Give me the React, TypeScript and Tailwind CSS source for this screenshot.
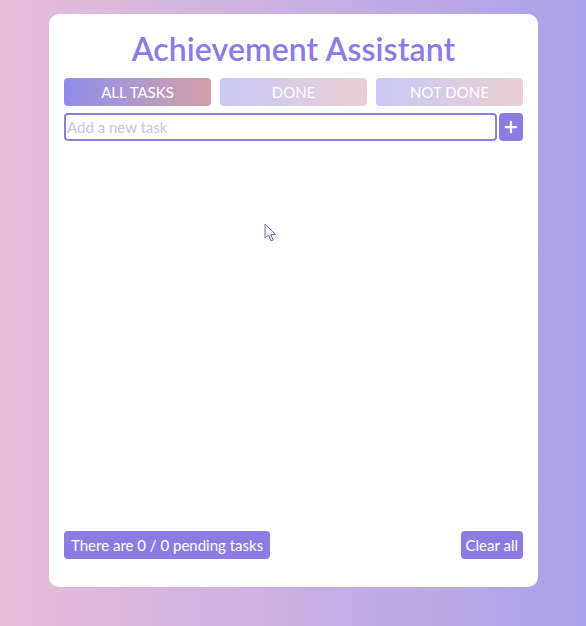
import { Plus } from 'lucide-react'

export default function App() {
  return (
    <div
      className="relative w-[586px] h-[626px] pt-[14px] bg-gradient-to-r from-[#e8bdd9] to-[#aaa1ea]"
      style={{ fontFamily: 'Lato, "Open Sans", sans-serif' }}
    >
      <div className="ml-[49px] w-[489px] h-[573px] rounded-[10px] bg-white px-[15px] pt-[17px] pb-[28px] flex flex-col">
        {/* Header */}
        <h1 className="text-center text-[32px] leading-[36px] font-semibold text-[#8c7be6] tracking-[0.1px]">
          Achievement Assistant
        </h1>

        {/* Filter tabs */}
        <div className="mt-[11px] grid grid-cols-3 gap-[9px]">
          <button className="h-[28px] rounded-[4px] bg-gradient-to-r from-[#8f8deb] to-[#d29fa6] text-white text-[15px]">
            ALL TASKS
          </button>
          <button className="h-[28px] rounded-[4px] bg-gradient-to-r from-[#c9c8f3] to-[#e9cfd3] text-white text-[15px]">
            DONE
          </button>
          <button className="h-[28px] rounded-[4px] bg-gradient-to-r from-[#c9c8f3] to-[#e9cfd3] text-white text-[15px]">
            NOT DONE
          </button>
        </div>

        {/* New task */}
        <div className="mt-[7px] flex gap-[2px]">
          <input
            placeholder="Add a new task"
            className="flex-1 h-[28px] rounded-[4px] border-2 border-[#8e7de3] px-[1px] text-[15px] outline-none placeholder:text-[#c5c3f0]"
          />
          <button className="w-[24px] h-[28px] rounded-[4px] bg-[#8d7be4] text-white flex items-center justify-center">
            <Plus size={18} strokeWidth={3} />
          </button>
        </div>

        <div className="flex-1" />

        {/* Footer */}
        <div className="flex justify-between items-center">
          <span className="h-[28px] px-[7px] rounded-[4px] bg-[#8d7be4] text-white text-[15px] leading-[28px]">
            There are 0 / 0 pending tasks
          </span>
          <button className="h-[28px] px-[5px] rounded-[4px] bg-[#8d7be4] text-white text-[15px]">
            Clear all
          </button>
        </div>
      </div>

      {/* Cursor */}
      <svg
        className="absolute left-[264px] top-[223px]"
        width="14"
        height="20"
        viewBox="0 0 14 20"
      >
        <path
          d="M1 1 L1 15 L4.5 12 L7 18 L9 17 L6.8 11.5 L11.5 11.5 Z"
          fill="white"
          stroke="#7b5fd6"
          strokeWidth="1"
          strokeLinejoin="round"
        />
      </svg>
    </div>
  )
}
